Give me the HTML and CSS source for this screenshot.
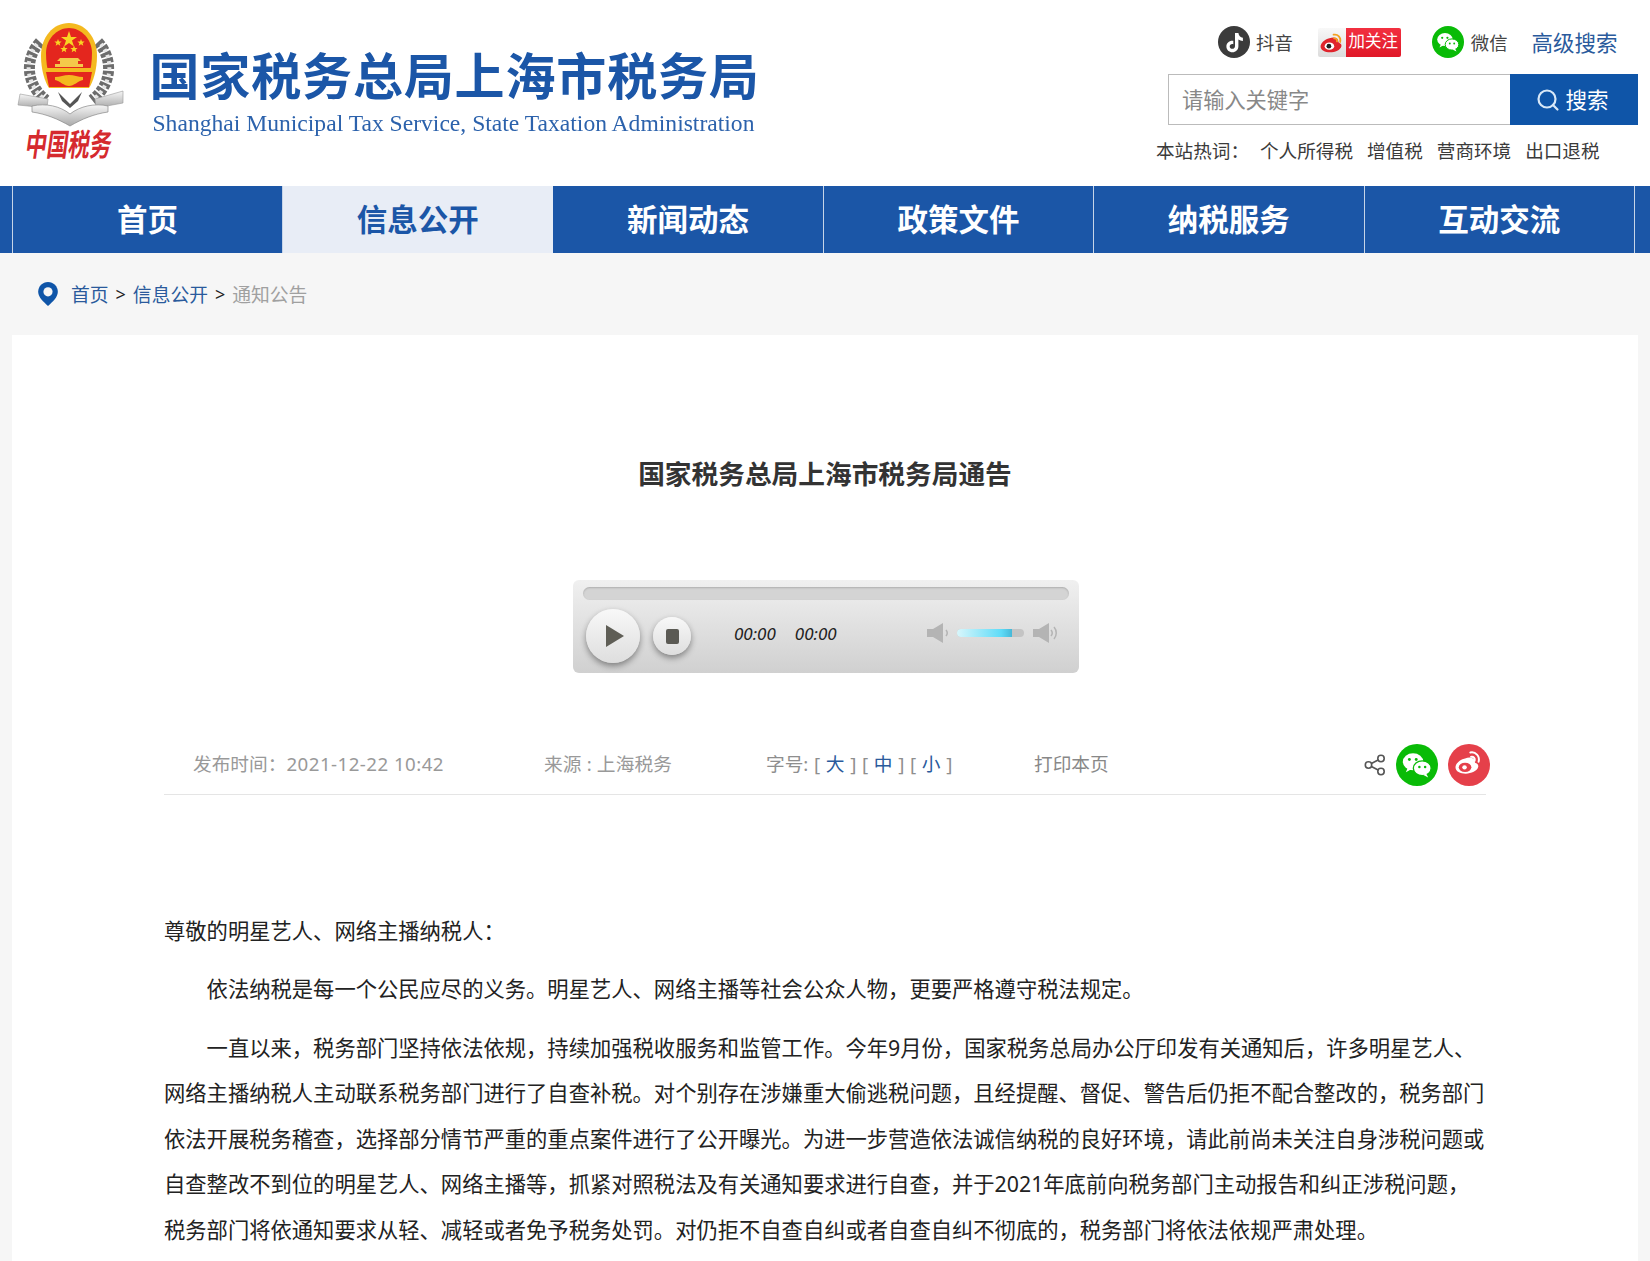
FILE: index.html
```html
<!DOCTYPE html>
<html lang="zh-CN">
<head>
<meta charset="utf-8">
<title>国家税务总局上海市税务局通告</title>
<link rel="stylesheet" href="styles.css">
</head>
<body>
<header class="top">
  <div class="brand">
    <div class="emblem">
      <svg class="emblem-art" width="120" height="106" viewBox="14 22 120 106">
        <defs>
          <linearGradient id="silver" x1="0" y1="0" x2="0" y2="1"><stop offset="0" stop-color="#f6f6f6"/><stop offset="1" stop-color="#a9a9a9"/></linearGradient>
        </defs>
        <g fill="none">
          <path d="M40 42C25 58 25 84 46 100" stroke="#6d6d6d" stroke-width="11" stroke-dasharray="4.500 1.800"/>
          <path d="M98 42C113 58 113 84 92 100" stroke="#6d6d6d" stroke-width="11" stroke-dasharray="4.500 1.800"/>
          <path d="M37 44C24 60 26 84 44 99" stroke="#e6e6e6" stroke-width="4" stroke-dasharray="3 3.300"/>
          <path d="M101 44C114 60 112 84 94 99" stroke="#e6e6e6" stroke-width="4" stroke-dasharray="3 3.300"/>
        </g>
        <path d="M20 94l28 5-1 9-29-3z" fill="url(#silver)" stroke="#999" stroke-width=".6"/>
        <path d="M123 91l-28 8 1 9 27-5z" fill="url(#silver)" stroke="#999" stroke-width=".6"/>
        <path d="M32 106c14-3 28 0 38 8 10-8 25-11 38-8v6c-14 2-26 7-38 14-12-7-24-12-38-14z" fill="url(#silver)" stroke="#8a8a8a" stroke-width=".7"/>
        <path d="M58 92l12 12 12-12-4 9-8 7-8-7z" fill="#555"/>
        <path d="M69 23c16 0 28 14 28 33 0 14-4 26-8 32H49c-4-6-8-18-8-32 0-19 12-33 28-33z" fill="#f4b91f"/>
        <path d="M69 28c12 0 23 11 23 25 0 8-1 15-3 22H49c-2-7-3-14-3-22 0-14 11-25 23-25z" fill="#e4261e"/>
        <path d="M46 72h46l-3 15H49z" fill="#e4261e"/>
        <path d="M69 31l2 6h6l-5 3.600 2 6-5-3.700-5 3.700 2-6-5-3.600h6z" fill="#f9d423"/>
        <path d="M58 39l1 2.500h2.600l-2 1.700.7 2.600-2.300-1.500-2.300 1.500.7-2.600-2-1.700H57zM81 39l1 2.500h2.600l-2 1.700.7 2.600-2.300-1.500-2.300 1.500.7-2.600-2-1.700H80zM64 45.500l1 2.500h2.600l-2 1.700.7 2.600-2.300-1.500-2.300 1.500.7-2.600-2-1.700H63zM74 45.500l1 2.500h2.600l-2 1.700.7 2.600-2.300-1.500-2.300 1.500.7-2.600-2-1.700H73z" fill="#f9d423"/>
        <path d="M60 58h18l3 3h-3v3h5v3H55v-3h5v-3h-3z" fill="#f4c94a"/>
        <path d="M46 68h46v4H46zM55 77c5 0 9-2 14-2s9 2 14 2v3c-5 1-9 6-14 6s-9-5-14-6z" fill="#f4b91f"/>
      </svg>
      <div class="emblem-text">中国税务</div>
    </div>
    <div class="brand-names">
      <div class="brand-cn">国家税务总局上海市税务局</div>
      <div class="brand-en">Shanghai Municipal Tax Service, State Taxation Administration</div>
    </div>
  </div>
  <div class="tools">
    <div class="social">
      <a class="social-item social-douyin">
        <svg width="32" height="32" viewBox="0 0 32 32"><circle cx="16" cy="16" r="16" fill="#3b3b3b"/><path d="M17 7h3.400c.3 2.700 1.900 4.400 4.500 4.700v3.300c-1.700 0-3.200-.5-4.500-1.400v6.600c0 3.500-2.700 6-6 6s-6-2.500-6-5.800c0-3.500 3-6.200 6.900-5.700v3.500c-2-.6-3.600.6-3.600 2.200 0 1.400 1.200 2.400 2.700 2.400 1.500 0 2.600-1.100 2.600-2.900z" fill="#fff"/></svg>
        <span class="social-label">抖音</span>
      </a>
      <a class="follow">
        <span class="follow-icon">
          <svg width="27" height="25" viewBox="0 0 26 24"><path d="M11 8c4-1.600 8-.8 8.500 2.400.2 1 0 1.500.7 1.800 2 .7 2.700 2 2.300 3.600-.9 3.300-6 5.700-11 5.700-4.700 0-9-2-9-5.600 0-3 3.800-7 8.500-7.900z" fill="#e0242c"/><ellipse cx="11" cy="15.500" rx="4.600" ry="3.500" fill="#fff"/><circle cx="10.500" cy="15.500" r="2.300" fill="#222"/><path d="M15 4.500c4-.8 7.500 2.600 6.300 7M15.500 8c2-.4 3.300 1.200 2.800 3" fill="none" stroke="#f4a020" stroke-width="1.700" stroke-linecap="round"/></svg>
        </span>
        <span class="follow-text">加关注</span>
      </a>
      <a class="social-item social-wechat">
        <svg width="32" height="32" viewBox="0 0 32 32"><circle cx="16" cy="16" r="16" fill="#09bb07"/><ellipse cx="13" cy="13.500" rx="7.800" ry="6.500" fill="#fff"/><path d="M9 18l-1.500 3.500 4.500-2.500z" fill="#fff"/><circle cx="10.200" cy="11.800" r="1.100" fill="#09bb07"/><circle cx="15.400" cy="11.800" r="1.100" fill="#09bb07"/><ellipse cx="20" cy="18.500" rx="6.800" ry="5.600" stroke="#09bb07" stroke-width="1" fill="#fff"/><path d="M23 22.500l1.500 3-4-2z" fill="#fff"/><circle cx="17.800" cy="17.500" r=".95" fill="#09bb07"/><circle cx="22.200" cy="17.500" r=".95" fill="#09bb07"/></svg>
        <span class="social-label">微信</span>
      </a>
      <a class="advanced">高级搜索</a>
    </div>
    <div class="search">
      <div class="search-input">请输入关键字</div>
      <div class="search-btn">
        <svg width="24" height="24" viewBox="0 0 24 24"><circle cx="11" cy="11" r="8.500" fill="none" stroke="#d8e8f8" stroke-width="2.200"/><path d="M17 17l4.500 4.500" stroke="#d8e8f8" stroke-width="2.200" stroke-linecap="round"/></svg>
        <span class="search-label">搜索</span>
      </div>
    </div>
    <div class="hot">
      <span class="hot-label">本站热词：</span>
      <a>个人所得税</a><a>增值税</a><a>营商环境</a><a>出口退税</a>
    </div>
  </div>
</header>

<nav class="nav">
  <a class="nav-item">首页</a>
  <a class="nav-item nav-active">信息公开</a>
  <a class="nav-item">新闻动态</a>
  <a class="nav-item">政策文件</a>
  <a class="nav-item">纳税服务</a>
  <a class="nav-item">互动交流</a>
</nav>

<div class="crumbs">
  <svg width="20" height="24" viewBox="1 1 18 22"><path d="M10 1C5 1 1 5 1 10c0 5 5 9.500 9 13 4-3.500 9-8 9-13 0-5-4-9-9-9z" fill="#0f55a8"/><circle cx="10" cy="10" r="4.200" fill="#f6f6f6"/></svg>
  <a>首页</a><span class="sep">&gt;</span><a>信息公开</a><span class="sep">&gt;</span><span class="here">通知公告</span>
</div>

<main class="card">
  <h1 class="title">国家税务总局上海市税务局通告</h1>

  <div class="player">
    <div class="track"></div>
    <div class="controls">
      <div class="btn-play"><svg width="18" height="22" viewBox="0 0 18 22"><path d="M0 0l18 11L0 22z" fill="#5f5e56"/></svg></div>
      <div class="btn-stop"><span class="stop-square"></span></div>
      <div class="times"><span>00:00</span><span>00:00</span></div>
      <div class="volume">
        <svg width="24" height="22" viewBox="0 0 24 22"><path d="M0 7h6l10-6v20L6 15H0z" fill="#b4b4b4"/><path d="M19 8c1.500 1.800 1.500 4.200 0 6" fill="none" stroke="#b4b4b4" stroke-width="1.500"/></svg>
        <div class="vol-bar"><div class="vol-fill"></div></div>
        <svg class="vol-max" width="26" height="22" viewBox="0 0 26 22"><path d="M0 7h6l10-6v20L6 15H0z" fill="#b4b4b4"/><path d="M18 8c1.500 1.800 1.500 4.200 0 6M21 5c3 3.500 3 8.500 0 12" fill="none" stroke="#b4b4b4" stroke-width="1.500"/></svg>
      </div>
    </div>
  </div>

  <div class="meta">
    <span class="meta-date">发布时间：<span class="meta-digits">2021-12-22 10:42</span></span>
    <span class="meta-source">来源 : 上海税务</span>
    <span class="meta-size">字号: [ <a>大</a> ] [ <a>中</a> ] [ <a>小</a> ]</span>
    <span class="meta-print">打印本页</span>
    <span class="share">
      <svg class="share-glyph" width="24" height="24" viewBox="0 0 24 24"><g fill="none" stroke="#555" stroke-width="1.600"><circle cx="5.500" cy="12" r="3.200"/><circle cx="18" cy="5.500" r="3.200"/><circle cx="18" cy="18.500" r="3.200"/><path d="M8.400 10.500l6.700-3.500M8.400 13.500l6.700 3.500"/></g></svg>
      <svg width="42" height="42" viewBox="0 0 32 32"><circle cx="16" cy="16" r="16" fill="#09bb07"/><ellipse cx="13" cy="13.500" rx="7.800" ry="6.500" fill="#fff"/><path d="M9 18l-1.500 3.500 4.500-2.500z" fill="#fff"/><circle cx="10.200" cy="11.800" r="1.100" fill="#09bb07"/><circle cx="15.400" cy="11.800" r="1.100" fill="#09bb07"/><ellipse cx="20" cy="18.500" rx="6.800" ry="5.600" stroke="#09bb07" stroke-width="1" fill="#fff"/><path d="M23 22.500l1.500 3-4-2z" fill="#fff"/><circle cx="17.800" cy="17.500" r=".95" fill="#09bb07"/><circle cx="22.200" cy="17.500" r=".95" fill="#09bb07"/></svg>
      <svg width="42" height="42" viewBox="0 0 32 32"><circle cx="16" cy="16" r="16" fill="#e5404a"/><path d="M13 11c3.500-1.400 7-.7 7.400 2 .1.900 0 1.300.6 1.500 1.700.6 2.300 1.700 2 3.100-.8 2.900-5.200 5-9.500 5-4.100 0-7.800-1.700-7.800-4.900 0-2.600 3.300-6 7.300-6.700z" fill="#fff"/><ellipse cx="13" cy="17.800" rx="4.800" ry="3.600" fill="#e5404a"/><circle cx="12.600" cy="17.800" r="1.700" fill="#fff"/><path d="M17 6.500c4-.8 7.500 2.600 6.300 7M17.500 9.800c2-.4 3.300 1.200 2.800 3" fill="none" stroke="#fff" stroke-width="1.500" stroke-linecap="round"/></svg>
    </span>
  </div>

  <article class="body">
    <p class="greet">尊敬的明星艺人、网络主播纳税人：</p>
    <p>依法纳税是每一个公民应尽的义务。明星艺人、网络主播等社会公众人物，更要严格遵守税法规定。</p>
    <p>一直以来，税务部门坚持依法依规，持续加强税收服务和监管工作。今年9月份，国家税务总局办公厅印发有关通知后，许多明星艺人、网络主播纳税人主动联系税务部门进行了自查补税。对个别存在涉嫌重大偷逃税问题，且经提醒、督促、警告后仍拒不配合整改的，税务部门依法开展税务稽查，选择部分情节严重的重点案件进行了公开曝光。为进一步营造依法诚信纳税的良好环境，请此前尚未关注自身涉税问题或自查整改不到位的明星艺人、网络主播等，抓紧对照税法及有关通知要求进行自查，并于2021年底前向税务部门主动报告和纠正涉税问题，税务部门将依通知要求从轻、减轻或者免予税务处罚。对仍拒不自查自纠或者自查自纠不彻底的，税务部门将依法依规严肃处理。</p>
  </article>
</main>
</body>
</html>
```

FILE: styles.css
```css
* { box-sizing: border-box; }
html, body { margin: 0; height: 1261px; overflow: hidden; }
body {
  background: #f6f6f6;
  color: #333;
  font-family: "Noto Sans", "Noto Sans CJK SC", sans-serif;
  font-size: 18.6px;
}
a { color: inherit; text-decoration: none; }

.top {
  height: 186px;
  background: #fff;
  display: flex;
  justify-content: space-between;
  padding: 22px 12px 0 14px;
}
.brand { display: flex; }
.emblem { width: 120px; }
.emblem-art { display: block; }
.emblem-text {
  margin: -2px 0 0 12px;
  font-size: 21.5px;
  line-height: 36px;
  font-weight: 700;
  color: #d52a2e;
  white-space: nowrap;
  transform: skewX(-8deg) scaleY(1.45);
}
.brand-names { margin: 24px 0 0 15.500px; filter: blur(.35px); }
.brand-cn {
  font-size: 50px;
  line-height: 60px;
  font-weight: 700;
  letter-spacing: .85px;
  color: #1b56a7;
  white-space: nowrap;
}
.brand-en {
  margin: 0 0 0 3px;
  font-family: "Liberation Serif", serif;
  font-size: 23.600px;
  line-height: 34px;
  color: #2c62ac;
  white-space: nowrap;
}

.tools { width: 481px; margin-left: 0; display: flex; flex-direction: column; }
.social { display: flex; align-items: center; height: 40px; padding-left: 61px; }
.social-item { display: flex; align-items: center; }
.social-label { margin-left: 6px; font-size: 18.400px; color: #444; }
.social-wechat .social-label { margin-left: 7px; }
.follow { display: flex; height: 29px; width: 83px; margin-left: 25px; border-radius: 2px; overflow: hidden; }
.follow-icon { width: 28px; background: linear-gradient(#f8f8f8, #dcdcdc); display: flex; align-items: center; justify-content: center; }
.follow-text { flex: 1; background: linear-gradient(#f23040, #e01828); color: #fff; font-size: 16.500px; line-height: 26px; text-align: center; }
.social-wechat { margin-left: 31px; }
.advanced { margin: 0 0 2px 24px; font-size: 21.500px; color: #2a5a9c; }

.search { display: flex; height: 51px; margin: 12px 0 0 11px; }
.search-input {
  flex: 1;
  border: 1px solid #bbb;
  border-right: 0;
  padding-left: 13px;
  font-size: 21.200px;
  line-height: 49px;
  color: #888;
}
.search-btn {
  width: 128px;
  background: #0f55a8;
  color: #fff;
  font-size: 21.500px;
  display: flex;
  align-items: center;
  justify-content: center;
  gap: 5px;
  padding-right: 3px;
}
.search-label { margin-bottom: 2px; }
.hot { display: flex; margin: 11px 0 0 -1px; font-size: 18.600px; line-height: 30px; color: #3a3a3a; white-space: nowrap; }
.hot-label { width: 104px; }
.hot a { margin-right: 14px; }

.nav {
  height: 67px;
  background: #1b56a7;
  display: flex;
  padding-left: 12px;
}
.nav-item {
  width: 270.400px;
  border-right: 1px solid #c6d4e8;
  color: #fff;
  font-size: 30.500px;
  font-weight: 700;
  line-height: 67px;
  text-align: center;
}
.nav-item:first-child { width: 271px; border-left: 1px solid #c6d4e8; }
.nav-active { background: #e8edf6; color: #1b56a7; border-right-color: #e8edf6; }

.crumbs {
  height: 82px;
  display: flex;
  align-items: center;
  padding: 0 0 1px 38px;
  font-size: 18.800px;
  color: #2a5a9c;
}
.crumbs svg { margin-right: 13px; }
.sep { margin: 0 7px; color: #222; font-size: 18px; }
.here { color: #a0a0a0; }

.card {
  margin: 0 12px;
  height: 926px;
  background: #fff;
  padding: 0 152px;
}
.title {
  margin: 0;
  padding-top: 117px;
  font-size: 26.700px;
  line-height: 44px;
  font-weight: 700;
  text-align: center;
  color: #333;
}

.player {
  width: 506px;
  height: 93px;
  margin: 84px 0 0 409px;
  padding: 7px 10px 0;
  border-radius: 6px;
  background: linear-gradient(#f0f0f0, #d0d0d0);
}
.track {
  height: 13px;
  border-radius: 7px;
  background: #d4d4d4;
  box-shadow: inset 0 1px 2px rgba(0,0,0,.18);
}
.controls { display: flex; align-items: center; height: 72px; padding: 0 0 0 3px; }
.btn-play, .btn-stop {
  display: flex;
  align-items: center;
  justify-content: center;
  border-radius: 50%;
  background: linear-gradient(#f8f8f8, #dedede);
  box-shadow: 0 3px 6px rgba(0,0,0,.4);
}
.btn-play { width: 54px; height: 54px; padding-left: 3px; }
.btn-stop { width: 38px; height: 38px; margin-left: 13px; }
.stop-square { width: 13px; height: 15px; border-radius: 2px; background: #5b5a54; }
.times { display: flex; gap: 19px; margin: 0 0 6px 43px; font-size: 17px; font-style: italic; color: #222; }
.volume { display: flex; align-items: center; margin: 0 0 6px 90px; gap: 6px; }
.vol-max { margin-left: 3px; }
.vol-bar { width: 67px; height: 8px; border-radius: 4px; background: #c4c4c4; overflow: hidden; }
.vol-fill { width: 55px; height: 8px; background: linear-gradient(90deg, #d8f6fb, #5fdcf8 80%, #46b8d8); }

.meta {
  height: 60px;
  margin-top: 62px;
  padding-left: 29px;
  display: flex;
  align-items: center;
  border-bottom: 1px solid #e5e5e5;
  color: #999;
  font-size: 18.700px;
  white-space: nowrap;
}
.meta-date, .meta-source, .meta-size, .meta-print { margin-bottom: 4px; }
.meta-date { width: 351px; }
.meta-digits { letter-spacing: .46px; }
.meta-source { width: 222px; letter-spacing: .15px; }
.meta-size { width: 268px; color: #8e8e8e; word-spacing: .8px; }
.meta-size a { color: #2a5a9c; }
.meta-print { color: #888; }
.share { margin-left: auto; margin-right: -4px; display: flex; align-items: center; gap: 10px; }
.share-glyph { margin-right: -1px; }

.body { padding-top: 113px; color: #222; font-size: 21.300px; line-height: 45.500px; }
.body p { margin: 0 0 12.900px; text-indent: 2em; }
.body .greet { text-indent: 0; }
```
